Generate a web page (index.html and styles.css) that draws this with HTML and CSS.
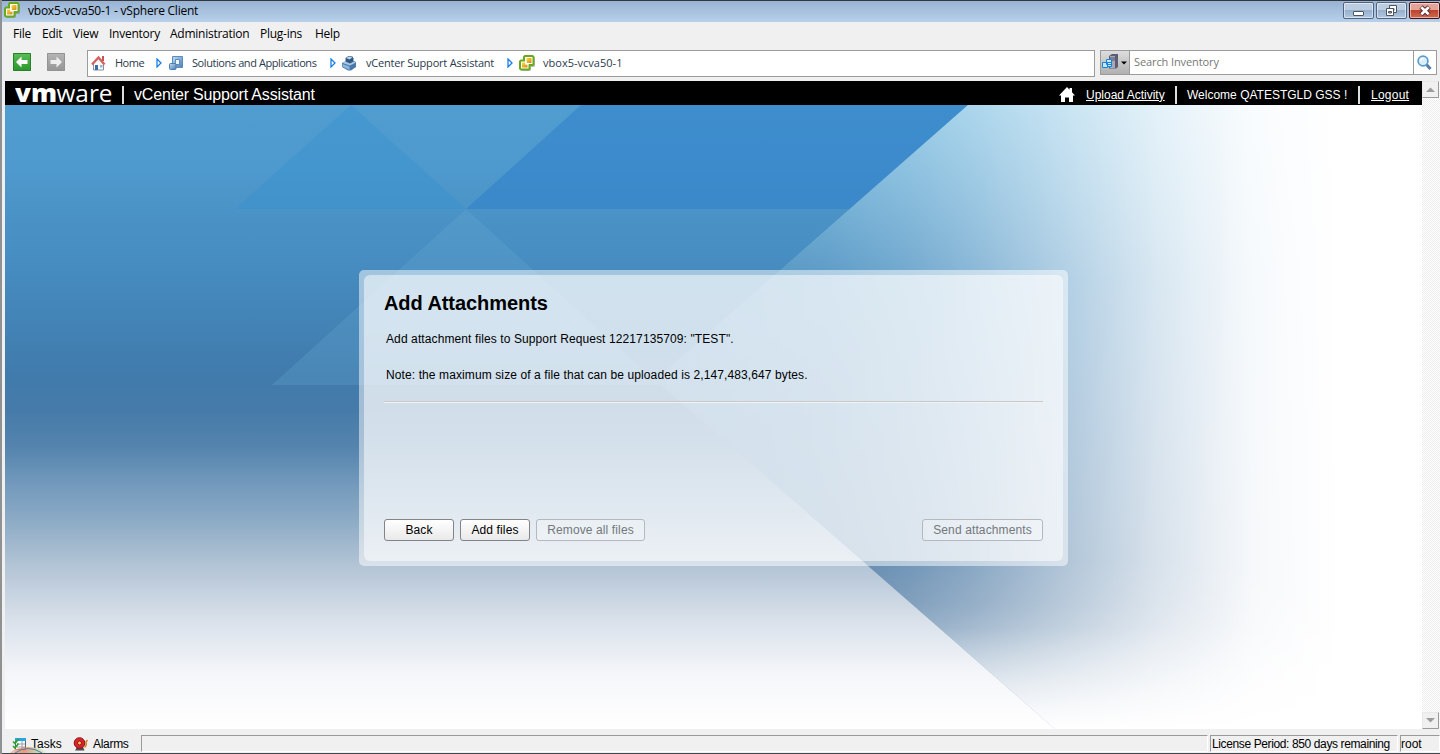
FILE: index.html
```html
<!DOCTYPE html>
<html lang="en">
<head>
<meta charset="utf-8">
<title>vbox5-vcva50-1 - vSphere Client</title>
<link rel="stylesheet" href="styles.css">
</head>
<body>
<svg class="defs" width="0" height="0">
  <defs>
    <linearGradient id="cube" x1="0" y1="0" x2="1" y2="1"><stop offset="0" stop-color="#c2def5"/><stop offset="1" stop-color="#4a7db4"/></linearGradient>
    <linearGradient id="gold" x1="0" y1="0" x2="1" y2="1"><stop offset="0" stop-color="#f8dc3c"/><stop offset="1" stop-color="#dd8412"/></linearGradient>
    <symbol id="vc" viewBox="0 0 16 16">
      <path d="M7 2h8l1 1v8l-1 1h-3v3l-1 1h-8.500v-10z" fill="#777" opacity=".5"/>
      <path d="M6 1h7.500l1 1v7l-1 1h-3v3.500l-1 1h-7.500l-1-1v-7l1-1h3v-3.500z" fill="#fff" stroke="#69a91e" stroke-width="2"/>
      <path d="M7.500 3h5v5h-5z" fill="url(#gold)"/>
      <path d="M3 7.500h3v2h2.500v3h-5.500z" fill="url(#gold)"/>
      <path d="M7 6v2.800h3" fill="none" stroke="#fff" stroke-width="1"/>
    </symbol>
  </defs>
</svg>
<div class="window">
  <header class="titlebar">
    <svg class="app-icon" width="16" height="16"><use href="#vc"/></svg>
    <span class="title">vbox5-vcva50-1 - vSphere Client</span>
    <div class="controls">
      <span class="ctl"><svg width="28" height="15"><rect x="9.500" y="8.500" width="10" height="4" rx=".5" fill="#fff" stroke="#4b5462"/></svg></span>
      <span class="ctl"><svg width="28" height="15" fill="#fff" stroke="#4b5462"><path d="M12.500 2.500h7v7h-7z"/><path d="M15 5.500h2v2h-2z" fill="#9fb7d3"/><path d="M9.500 5.500h7v7h-7z"/><path d="M11.500 8.500h3v1.500h-3z" fill="#9fb7d3"/></svg></span>
      <span class="ctl close"><svg width="28" height="15"><path d="M11 4l8 7.500M19 4l-8 7.500" stroke="#5b3037" stroke-width="4.800"/><path d="M11.300 4.300l7.400 6.900M18.700 4.300l-7.400 6.900" stroke="#fff" stroke-width="2.600"/></svg></span>
    </div>
  </header>
  <div class="frame">
    <nav class="menu">
      <span class="m-file">File</span><span class="m-edit">Edit</span><span class="m-view">View</span><span class="m-inv">Inventory</span><span class="m-adm">Administration</span><span class="m-plug">Plug-ins</span><span>Help</span>
    </nav>
    <div class="toolbar">
      <span class="nav-btn back"><svg width="18" height="18"><path d="M3 9l5.500-5.500v3.500h6v4h-6v3.500z" fill="#fff"/></svg></span>
      <span class="nav-btn fwd"><svg width="18" height="18"><path d="M15 9l-5.500-5.500v3.500h-6v4h6v3.500z" fill="#eee"/></svg></span>
      <div class="crumbs">
        <svg class="i-home" width="16" height="16"><path d="M2.500 8v7h10v-7l-5-5z" fill="#fbfbfb" stroke="#8b8f94"/><path d="M11 1h2v5h-2z" fill="#c8524e"/><path d="M1 9.500l6.500-7 6 7" fill="none" stroke="#d4625c" stroke-width="2.400"/><path d="M4 10h3v5h-3z" fill="#3b6ea8"/><path d="M9 10h2.500v2.500h-2.500z" fill="#8fb7de"/></svg>
        <span class="c-home">Home</span>
        <svg class="arrow" width="6" height="10"><path d="M1 1l4 4-4 4z" fill="#fff" stroke="#1a7fe4" stroke-width="1.300"/></svg>
        <svg class="i-sol" width="16" height="16"><path d="M4.500 1.500h10v11h-10z" fill="url(#cube)" stroke="#5b8dbd"/><path d="M7.500 4.500h4v5h-4z" fill="#eef6fd" stroke="#5b8dbd"/><rect x="1.500" y="8.500" width="6.500" height="6" rx="1" fill="url(#cube)" stroke="#4d7eac"/></svg>
        <span class="c-sol">Solutions and Applications</span>
        <svg class="arrow" width="6" height="10"><path d="M1 1l4 4-4 4z" fill="#fff" stroke="#1a7fe4" stroke-width="1.300"/></svg>
        <svg class="i-asst" width="16" height="16"><path d="M1 8l4-2h9l1 2v4l-5 3.500h-3l-6-3.500z" fill="#4b78a9"/><path d="M1.500 8l4-2.500 8.500 1v1.500l-5 2.500z" fill="#a6c8e6"/><path d="M1.500 9l7 2.500v3.500l-7-3.500z" fill="#8db7de"/><path d="M4.500 3l3-2 4 .5 1 2v3l-3.500 2-4.500-2z" fill="#31577f"/><path d="M5 3l3-1.500 3.500 1-3 2z" fill="#b8d5ee"/></svg>
        <span class="c-asst">vCenter Support Assistant</span>
        <svg class="arrow" width="6" height="10"><path d="M1 1l4 4-4 4z" fill="#fff" stroke="#1a7fe4" stroke-width="1.300"/></svg>
        <svg class="i-vc" width="16" height="16"><use href="#vc"/></svg>
        <span class="c-vc">vbox5-vcva50-1</span>
      </div>
      <div class="search">
        <span class="scope"><svg width="28" height="22"><path d="M8 5l3-2h6v13l-2 1.500h-7z" fill="#5c5d72"/><path d="M9 5h5v12h-5z" fill="#a7a8bc"/><path d="M9 7h5M9 9h5" stroke="#54556a"/><g fill="#c9e7fb" stroke="#1684d8"><path d="M5.500 8.500h5v5h-5zM1.500 11.500h5v5h-5zM6.500 11.500h4v4h-4z"/></g><path d="M20 10.500h6l-3 3z" fill="#000"/></svg></span>
        <span class="query">Search Inventory</span>
        <span class="go"><svg width="18" height="20"><path d="M10 10l4.500 5" stroke="#5a7da6" stroke-width="3"/><circle cx="7" cy="7" r="4.900" fill="#d9effc" stroke="#5b9ccc" stroke-width="1.700"/><path d="M4.500 7q.5-2.500 3-2.500" fill="none" stroke="#fff" stroke-width="1.300"/></svg></span>
      </div>
    </div>
    <div class="body">
      <main class="page">
        <div class="brandbar">
          <svg class="logo" width="100" height="36"><text class="vm" x="0" y="27" textLength="42" lengthAdjust="spacingAndGlyphs">vm</text><text class="ware" x="41.500" y="27" textLength="56" lengthAdjust="spacingAndGlyphs">ware</text></svg>
          <span class="sep"></span>
          <span class="product">vCenter Support Assistant</span>
          <div class="links">
            <svg class="house" width="16" height="15"><path d="M0 8.500l8-8.500 2.500 2.700v-1.700h2.500v4.300l3 3.200h-2v6.500h-4v-4.500h-4v4.500h-4v-6.500z" fill="#fff"/></svg>
            <a class="l-up">Upload Activity</a><span class="sep"></span>
            <span class="l-wel">Welcome QATESTGLD GSS !</span><span class="sep"></span>
            <a class="l-out">Logout</a>
          </div>
        </div>
        <div class="stage">
          <svg class="art" width="1417" height="624" viewBox="5 105 1417 624">
            <defs>
              <linearGradient id="sky" gradientUnits="userSpaceOnUse" x1="0" y1="105" x2="0" y2="729">
                <stop offset="0" stop-color="#509dd0"/><stop offset=".1" stop-color="#4e99cd"/><stop offset=".26" stop-color="#468cc0"/><stop offset=".43" stop-color="#407bac"/><stop offset=".49" stop-color="#467ba9"/><stop offset=".55" stop-color="#5584ae"/><stop offset=".6" stop-color="#6f97bb"/><stop offset=".66" stop-color="#8aa9c4"/><stop offset=".735" stop-color="#b1c3d5"/><stop offset=".83" stop-color="#dbe2eb"/><stop offset=".91" stop-color="#f4f6f9"/><stop offset="1" stop-color="#fff"/>
              </linearGradient>
              <linearGradient id="deep" gradientUnits="userSpaceOnUse" x1="0" y1="105" x2="0" y2="729">
                <stop offset="0" stop-color="#58add9"/><stop offset=".26" stop-color="#4c92c2"/><stop offset=".5" stop-color="#4b84b3"/><stop offset=".8" stop-color="#48759f"/><stop offset="1" stop-color="#8fa7c1"/>
              </linearGradient>
              <linearGradient id="fadeX" gradientUnits="userSpaceOnUse" x1="655" y1="0" x2="1340" y2="0">
                <stop offset="0" stop-color="#fff" stop-opacity="0"/><stop offset=".25" stop-color="#fff" stop-opacity=".1"/><stop offset=".37" stop-color="#fff" stop-opacity=".22"/><stop offset=".46" stop-color="#fff" stop-opacity=".34"/><stop offset=".6" stop-color="#fff" stop-opacity=".57"/><stop offset=".73" stop-color="#fff" stop-opacity=".78"/><stop offset=".87" stop-color="#fff" stop-opacity=".95"/><stop offset="1" stop-color="#fff"/>
              </linearGradient>
              <linearGradient id="fadeTop" gradientUnits="userSpaceOnUse" x1="0" y1="105" x2="0" y2="280">
                <stop offset="0" stop-color="#fff" stop-opacity=".24"/><stop offset="1" stop-color="#fff" stop-opacity="0"/>
              </linearGradient>
              <linearGradient id="fadeY" gradientUnits="userSpaceOnUse" x1="0" y1="560" x2="0" y2="729">
                <stop offset="0" stop-color="#fff" stop-opacity="0"/><stop offset=".4" stop-color="#fff" stop-opacity=".18"/><stop offset=".75" stop-color="#fff" stop-opacity=".68"/><stop offset="1" stop-color="#fff"/>
              </linearGradient>
            </defs>
            <rect x="5" y="105" width="1417" height="624" fill="url(#sky)"/>
            <path d="M351 105L466 209H235z" fill="#3590cf" opacity=".38"/>
            <path d="M581 105H1000V209H466z" fill="#2f7fca" opacity=".55"/>
            <path d="M466 209L660 385H272z" fill="#67abd4" opacity=".27"/>
            <path d="M968 105L655 380L1055 729H1422V105z" fill="url(#deep)"/>
            <path d="M968 105L655 380L1055 729H1422V105z" fill="url(#fadeTop)"/>
            <path d="M968 105L655 380L1055 729H1422V105z" fill="url(#fadeX)"/>
            <path d="M968 105L655 380L1055 729H1422V105z" fill="url(#fadeY)"/>
          </svg>
          <section class="panel">
            <div class="card">
              <h1>Add Attachments</h1>
              <p class="p1">Add attachment files to Support Request 12217135709: "TEST".</p>
              <p class="p2">Note: the maximum size of a file that can be uploaded is 2,147,483,647 bytes.</p>
              <div class="rule"></div>
              <div class="buttons">
                <span class="btn b-back">Back</span><span class="btn b-add">Add files</span><span class="btn b-rem off">Remove all files</span><span class="btn b-send off">Send attachments</span>
              </div>
            </div>
          </section>
        </div>
      </main>
      <div class="scroll">
        <span class="sb"><svg width="15" height="15"><path d="M3 10h9l-4.500-4.500z" fill="#9c9c9c"/></svg></span>
        <span class="sb"><svg width="15" height="15"><path d="M3 5h9l-4.500 4.500z" fill="#9c9c9c"/></svg></span>
      </div>
    </div>
    <footer class="status">
      <svg class="i-task" width="15" height="14"><path d="M3.500 1.500h10v11h-10z" fill="#fff" stroke="#606468"/><path d="M3 1h11v3h-11z" fill="#28a4e4"/><path d="M5 7h8M5 10h8M10 4v8" stroke="#9aa0a6"/><path d="M1 4.500l2 2 3.500-4.500M1 9l2 2 3.500-4.500" fill="none" stroke="#2ea12e" stroke-width="1.700"/></svg>
      <span class="s-task">Tasks</span>
      <svg class="i-alarm" width="16" height="14"><path d="M4 10h6l1.500 3.500h-9.500z" fill="#4e4e52"/><circle cx="6.500" cy="6" r="5.300" fill="#d8252b" stroke="#8d1015"/><circle cx="6.500" cy="6" r="2" fill="#f4c060" stroke="#a01018"/><path d="M11.500 10.500q2.500-2 1.500-5.500l1.500-2" fill="none" stroke="#d28a28" stroke-width="1.600"/></svg>
      <span class="s-alarm">Alarms</span>
      <span class="well grow"></span>
      <span class="well lic"><span>License Period: 850 days remaining</span></span>
      <span class="well root"><span>root</span></span>
      <svg class="orb" width="44" height="7"><defs><linearGradient id="og"><stop offset="0" stop-color="#e9c8b8"/><stop offset=".4" stop-color="#e87b5b"/><stop offset=".75" stop-color="#b6d8a5"/><stop offset="1" stop-color="#efefef"/></linearGradient></defs><ellipse cx="22" cy="13" rx="21" ry="12" fill="url(#og)" opacity=".75"/><path d="M9 7q13-9 27 0" fill="none" stroke="#587f9b"/></svg>
    </footer>
  </div>
</div>
</body>
</html>
```
FILE: styles.css
```css
* { box-sizing: border-box; }
body { margin: 0; width: 1440px; height: 754px; overflow: hidden; font: 12px "Open Sans", "Noto Sans", sans-serif; color: #111; background: #f0f0f0; }
svg { display: block; flex: none; }
.defs { position: absolute; }
span, a { white-space: nowrap; }
.window { width: 1440px; height: 754px; display: flex; flex-direction: column; border-left: 2px solid #8f9193; }
.titlebar { height: 22px; border-top: 1px solid #34373d; background: linear-gradient(#98b3d3, #b8d0ea); display: flex; align-items: flex-start; padding-left: 2px; }
.app-icon { margin-top: 1px; }
.title { margin: 1px 0 0 8px; line-height: 18px; letter-spacing: -.23px; color: #000; }
.controls { margin-left: auto; display: flex; gap: 2px; padding-top: 1px; }
.ctl { width: 31px; height: 17px; border: 1px solid #50647f; border-radius: 2px; box-shadow: inset 0 0 0 1px rgba(255,255,255,.5); background: linear-gradient(#bccde2 45%, #96b0cf 50%, #b2c8e1); }
.ctl.close { border-color: #43131c; background: linear-gradient(#e2a499 45%, #c1432c 50%, #cf6b50); }
.frame { flex: 1; display: flex; flex-direction: column; border-bottom: 1px solid #42474e; }
.menu { height: 24px; display: flex; padding-left: 11px; line-height: 24px; font-size: 12px; color: #000; letter-spacing: -.25px; }
.m-file { width: 29px; }
.m-edit { width: 31px; }
.m-view { width: 36px; }
.m-inv { width: 61px; }
.m-adm { width: 90px; }
.m-plug { width: 55px; }
.toolbar { height: 35px; display: flex; padding: 4px 3px 0 11px; align-items: flex-start; }
.nav-btn { width: 18px; height: 18px; margin-top: 3px; border-radius: 1px; }
.back { background: linear-gradient(#5abf56, #2a962a); box-shadow: inset 0 0 0 1px #26802c; margin-right: 16px; }
.fwd { background: linear-gradient(#b5b5b5, #959595); box-shadow: inset 0 0 0 1px #939393; margin-right: 22px; }
.crumbs { width: 1008px; height: 27px; background: #fff; border: 1px solid #9b9b9b; display: flex; align-items: center; padding: 0 0 1px 3px; font-size: 11px; color: #2b3a4b; letter-spacing: -.2px; }
.crumbs > * { flex: none; }
.crumbs > span { position: relative; top: -1px; }
.c-home { margin-left: 8px; width: 41px; letter-spacing: -.5px; }
.arrow { margin-right: 6px; }
.c-sol { margin-left: 8px; width: 138px; letter-spacing: -.42px; }
.arrow + .i-asst { margin-left: -1px; }
.c-asst { margin-left: 9px; width: 141px; }
.c-vc { margin-left: 8px; letter-spacing: .02px; }
.i-vc { margin-left: 0; }
.search { margin-left: 5px; width: 337px; height: 25px; display: flex; border: 1px solid #9b9b9b; background: #fff; font-size: 11px; color: #777; }
.scope { width: 29px; background: linear-gradient(#ddd, #b0b0b0); border-right: 1px solid #9b9b9b; }
.query { flex: 1; padding-left: 4px; line-height: 22px; letter-spacing: -.1px; }
.go { width: 23px; border-left: 1px solid #9b9b9b; padding: 3px 2px; }
.body { height: 648px; display: flex; padding-left: 3px; }
.page { width: 1417px; font-family: "Liberation Sans", Arial, sans-serif; }
.brandbar { height: 24px; background: #000; color: #fff; display: flex; align-items: center; padding-left: 10px; }
.logo { margin: -6px 0; }
.logo text { fill: #fff; font-family: "Open Sans", sans-serif; font-size: 24px; }
.logo .vm { font-weight: 800; }
.logo .ware { font-weight: 400; }
.sep { width: 2px; height: 18px; background: #ddd; margin-top: 3px; }
.logo + .sep { margin-left: 7px; }
.product { margin: 3px 0 0 10px; font-size: 16px; letter-spacing: -.17px; }
.links { margin-left: auto; display: flex; align-items: center; font-size: 12px; padding-right: 11px; }
.links > * { flex: none; }
.house { margin: 3px 11px 0 0; }
.links a, .links .l-wel { margin-top: 3px; }
.links a { text-decoration: underline; }
.l-up { width: 89px; }
.l-wel { margin-left: 10px; width: 171px; }
.links .l-out { margin-left: 11px; width: 40px; letter-spacing: .25px; }
.stage { height: 624px; display: grid; }
.art { grid-area: 1 / 1; }
.panel { grid-area: 1 / 1; z-index: 1; width: 709px; height: 296px; margin: 165px 0 0 354px; padding: 5px; border-radius: 5px; background: rgba(255,255,255,.5); }
.card { height: 286px; border-radius: 6px; background: rgba(255,255,255,.5); padding: 15px 20px 0; color: #000; }
h1 { margin: 0; font-size: 20px; line-height: 26px; letter-spacing: -.07px; }
p { margin: 0 0 0 2px; font-size: 12px; line-height: 16px; white-space: nowrap; letter-spacing: .105px; }
.p1 { margin-top: 15px; }
.p2 { margin-top: 20px; }
.rule { height: 2px; margin-top: 18px; background: linear-gradient(#c9c9c9 50%, #f1f2f3 50%); }
.buttons { display: flex; gap: 6px; margin-top: 116px; }
.btn { height: 22px; line-height: 20px; border: 1px solid #828487; border-radius: 3px; background: linear-gradient(#fff, #e9e9ea); text-align: center; font-size: 12px; letter-spacing: .12px; }
.b-back, .b-add { width: 70px; }
.b-rem { width: 109px; }
.b-send { width: 121px; margin-left: auto; }
.off { color: #73787c; border-color: #b5b9be; background: rgba(255,255,255,.25); }
.scroll { width: 18px; padding-right: 1px; display: flex; flex-direction: column; justify-content: space-between; background: repeating-conic-gradient(#eee 0 25%, #fff 0 50%) 0 0 / 2px 2px; }
.sb { width: 17px; height: 17px; background: #f0f0f0; border: 1px solid; border-color: #e8e8e8 #9a9a9a #9a9a9a #e8e8e8; }
.status { flex: 1; display: flex; align-items: flex-start; padding: 6px 0 0 10px; position: relative; font: 12px "Liberation Sans", Arial, sans-serif; color: #000; }
.status > svg { margin-top: 2px; }
.s-task, .s-alarm { line-height: 18px; }
.s-task { width: 42px; margin-left: 4px; }
.i-alarm { margin-left: 0; }
.s-alarm { margin-left: 4px; width: 48px; letter-spacing: -.3px; }
.well { height: 17px; border: 1px solid; border-color: #9a9a9a #fff #fff #9a9a9a; line-height: 17px; padding-left: 1px; }
.grow { flex: 1; margin-right: 2px; }
.lic { width: 188px; margin-right: 2px; letter-spacing: -.38px; }
.root { width: 40px; padding-left: 0; }
.status .orb { position: absolute; left: 4px; bottom: 0; margin: 0; }
```
